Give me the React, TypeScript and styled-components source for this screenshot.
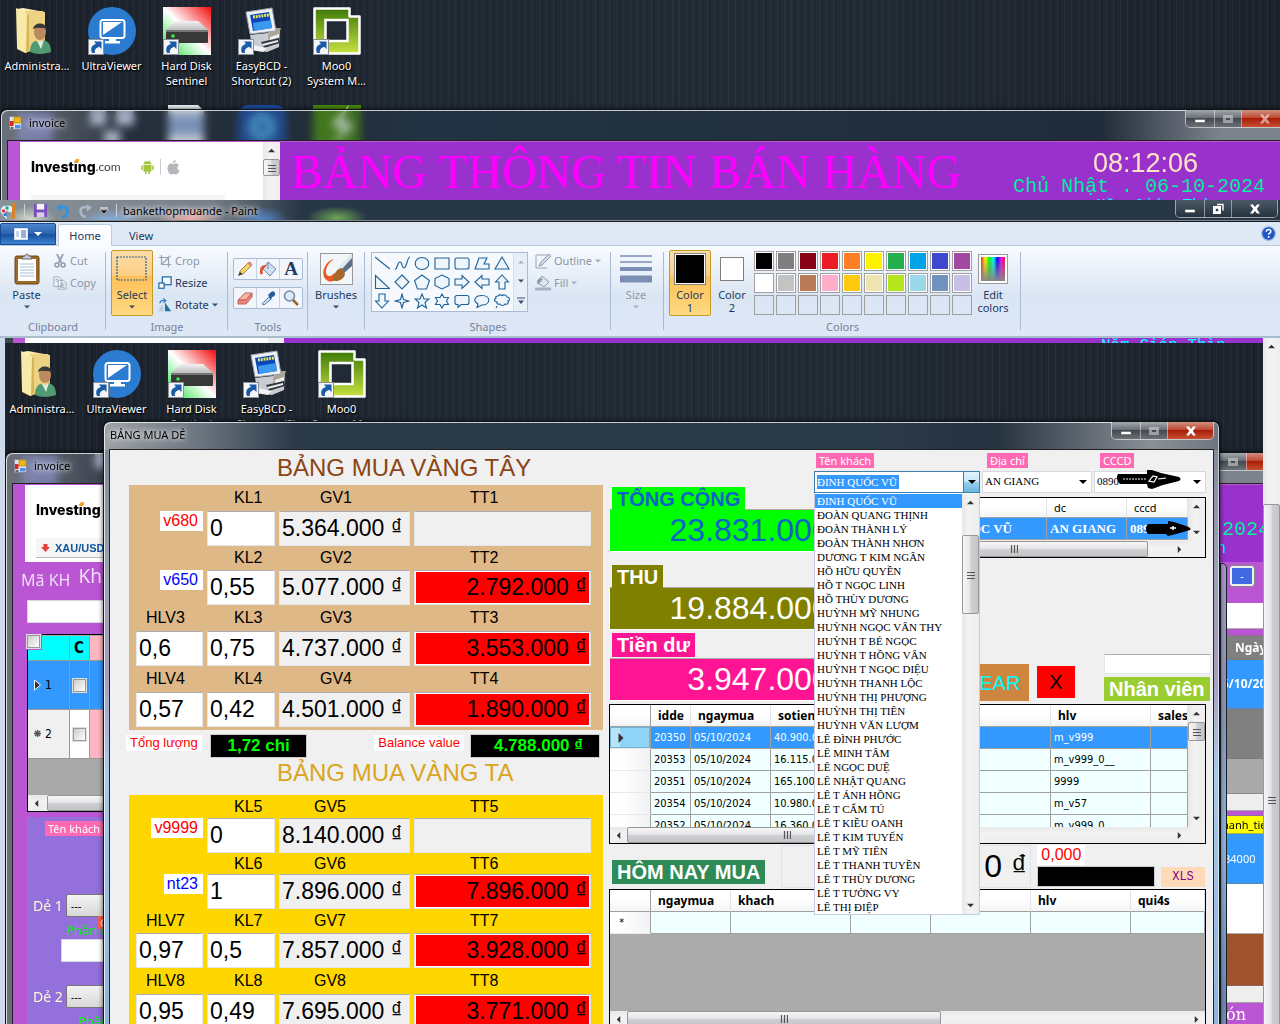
import React from "react";
import styled, { createGlobalStyle, css } from "styled-components";

const ui = `"Noto Sans", "Open Sans", sans-serif`;
const arial = `"Liberation Sans", Arial, sans-serif`;
const times = `"Liberation Serif", "Times New Roman", serif`;
const mono = `"Liberation Mono", "Courier New", monospace`;
const tahoma = `"DejaVu Sans Condensed", "Noto Sans", sans-serif`;

const GlobalStyle = createGlobalStyle`
  *, *::before, *::after { box-sizing: border-box; }
  html, body { margin: 0; height: 100%; overflow: hidden; }
  body { font: 11px/16px ${ui}; color: #000; background: #1d242e; }
  button, input, select { font: inherit; color: inherit; margin: 0; padding: 0; border: 0; border-radius: 0; }
  svg { display: block; flex: none; }
`;

const Screen = styled.div`
  height: 100vh;
  overflow: hidden;
  display: flex;
  flex-direction: column;
`;

/* ---------- desktop ---------- */

const Desktop = styled.div`
  position: relative;
  width: 100vw;
  min-width: 1280px;
  height: 100%;
  overflow: hidden;
  background:
    repeating-linear-gradient(90deg, rgba(255,255,255,.035) 0 1px, transparent 1px 3px, rgba(0,0,0,.1) 3px 4px, transparent 4px 7px),
    linear-gradient(90deg, #1c222c, #1f2833 30%, #222c37 60%, #1c232d);
`;

const TopStrip = styled.div`
  flex: 0 0 200px;
  overflow: hidden;
`;

const IconGrid = styled.div`
  display: grid;
  grid-template-columns: 74px repeat(4, 75px);
  grid-auto-rows: 98px;
  padding-top: 7px;
`;

const Shortcut = styled.div`
  display: flex;
  flex-direction: column;
  align-items: center;
  gap: 3px;
  color: #fff;
  font: 11px/15px ${ui};
  text-align: center;
  text-shadow: 0 1px 2px #000, 1px 1px 1px #000;
  white-space: pre-line;
`;

const LinkArrow = () => (
  <g>
    <rect x="0.5" y="32.5" width="15" height="15" fill="#f4f6f8" stroke="#8a8f98" />
    <path d="M4 46c-2-5 0-8 4-9l-2-2.500h7.500v7.500l-2.300-2.200c-3 1-5 3-4.200 6.200z" fill="#1a5ba8" />
  </g>
);

const AdminIcon = () => (
  <svg width="48" height="48" viewBox="0 0 48 48">
    <defs>
      <linearGradient id="fold" x1="0" x2="1" y1="0" y2="1"><stop offset="0" stopColor="#fff6c8" /><stop offset="1" stopColor="#e0b850" /></linearGradient>
    </defs>
    <path d="M4 2l6-1 22 4v34l-20 7-8-4z" fill="url(#fold)" />
    <path d="M12 4l18 0v32l-16 8z" fill="#ecd283" />
    <path d="M3 1l12 6v36l-2 3-9-5z" fill="#f9eaaa" />
    <path d="M14 7l2 1v34l-3 4z" fill="#d9b556" />
    <ellipse cx="27" cy="25" rx="6" ry="8" fill="#bb8a5e" />
    <path d="M20 22c1-7 13-8 14 1l-3-2c-4 0-8-1-11 1z" fill="#383838" />
    <path d="M17 45c0-7 3-11 6-11 3 2 6 1 8-1 5 2 7 5 7 12-5 2-14 3-21 0z" fill="#4f9a72" />
    <path d="M24 34l4 8 3-9c-3 2-4 2-7 1z" fill="#dfeee4" />
  </svg>
);

const ViewerIcon = () => (
  <svg width="48" height="48" viewBox="0 0 48 48">
    <circle cx="24" cy="24" r="24" fill="#2b7bd0" />
    <rect x="12.500" y="13" width="24" height="18" rx="2.500" fill="#2b7bd0" stroke="#fff" strokeWidth="2" />
    <path d="M15 15h19L15 28z" fill="#fff" />
    <path d="M21 31h7v3h4v2.500H17V34h4z" fill="#fff" />
    <LinkArrow />
  </svg>
);

const DiskIcon = () => (
  <svg width="48" height="48" viewBox="0 0 48 48">
    <defs>
      <linearGradient id="hd" x1="0" x2="1" y1="1" y2="0"><stop offset="0" stopColor="#1fe03a" /><stop offset=".5" stopColor="#fff" /><stop offset="1" stopColor="#f40a0a" /></linearGradient>
      <linearGradient id="hd2" x1="0" x2="0" y1="0" y2="1"><stop offset="0" stopColor="#f2f2f2" /><stop offset="1" stopColor="#bdbdbd" /></linearGradient>
    </defs>
    <rect width="48" height="48" fill="url(#hd)" />
    <path d="M3 23l10-9h22l10 9z" fill="url(#hd2)" />
    <rect x="3" y="23" width="42" height="13" rx="1" fill="#383838" />
    <rect x="3" y="23" width="42" height="2" fill="#777" />
    <circle cx="10" cy="29" r="1.800" fill="#35f040" />
    <LinkArrow />
  </svg>
);

const BcdIcon = () => (
  <svg width="48" height="48" viewBox="0 0 48 48">
    <path d="M12 28l18-2 6-6 6 2-1 18-12 5-14-2z" fill="#c9ccd2" />
    <path d="M30 28l5-7 8 0-4 12-8 2z" fill="#aaa691" />
    <path d="M32 30l9-3 0 3-9 4z" fill="#eef0f2" />
    <path d="M23 35l18-4 1 5-16 5z" fill="#34373e" />
    <path d="M24 37l16-4 0 2-15 4z" fill="#e8eaee" />
    <path d="M15 38l14 3-4 4-12-2z" fill="#f1f2f5" />
    <path d="M8 5l26-4 4 23-26 3z" fill="#eef0f4" stroke="#9aa0aa" />
    <path d="M12 8l19-3 3 16-19 3z" fill="#0c46b8" />
    <path d="M15 16l18-3 1 8-18 3z" fill="#3b9af0" />
    <path d="M15 10l16-2" stroke="#e6e45a" strokeWidth="3" strokeDasharray="2 .8" />
    <LinkArrow />
  </svg>
);

const MooIcon = () => (
  <svg width="48" height="48" viewBox="0 0 48 48">
    <defs>
      <linearGradient id="moo" x1="0" x2="0" y1="0" y2="1"><stop offset="0" stopColor="#3d7a08" /><stop offset="1" stopColor="#c8e240" /></linearGradient>
    </defs>
    <path d="M1.500 1.500h35v8h10v37h-45z" fill="url(#moo)" stroke="#fff" strokeWidth="2.500" strokeLinejoin="round" />
    <rect x="12.500" y="13" width="22" height="21" fill="#222a35" stroke="#fff" strokeWidth="2.500" />
    <LinkArrow />
  </svg>
);

const RowTwoIcon = ({ kind }: { kind: number }) => (
  <svg width="48" height="48" viewBox="0 0 48 48">
    {kind === 0 && <path d="M4 8h36v30H4z" fill="#6a6fc4" />}
    {kind === 1 && <path d="M2 6h16v14H2zM28 6h18v14H28zM16 26h16v14H16z" fill="#d4def4" />}
    {kind === 2 && <><path d="M5 0h30l6 6v42H5z" fill="#eef2f8" /><path d="M5 10h36v20H5z" fill="#8fa9d4" /></>}
    {kind === 3 && <><rect width="48" height="48" rx="10" fill="#1d4b9c" /><circle cx="24" cy="22" r="14" fill="#49a0dd" /><circle cx="24" cy="22" r="4" fill="#1d4b9c" /></>}
    {kind === 4 && <><rect width="48" height="48" fill="#4a8a0c" /><path d="M36 0L18 20l12 4-14 20 26-24-12-4z" fill="#e3f2d8" /></>}
  </svg>
);

const shortcuts = [
  { label: "Administra...", Icon: AdminIcon },
  { label: "UltraViewer", Icon: ViewerIcon },
  { label: "Hard Disk\nSentinel", Icon: DiskIcon },
  { label: "EasyBCD -\nShortcut (2)", Icon: BcdIcon },
  { label: "Moo0\nSystem M...", Icon: MooIcon },
];

const DesktopIcons = () => (
  <IconGrid>
    {shortcuts.map(({ label, Icon }) => (
      <Shortcut key={label}><Icon />{label}</Shortcut>
    ))}
    {[0, 1, 2, 3, 4].map((k) => (
      <Shortcut key={k}><RowTwoIcon kind={k} /></Shortcut>
    ))}
  </IconGrid>
);

/* ---------- window chrome ---------- */

const Frame = styled.section<{ $side: number }>`
  position: absolute;
  display: flex;
  flex-direction: column;
  padding: 0 ${(p) => p.$side}px;
  border: 1px solid #10151b;
  border-bottom: 0;
  border-radius: 7px 7px 0 0;
  box-shadow: inset 1px 1px 0 rgba(255,255,255,.75), inset -1px 0 0 rgba(255,255,255,.6), 0 0 5px rgba(0,0,0,.7);
  backdrop-filter: blur(4px);
`;

const InvoiceFrame = styled(Frame)`
  top: 109px;
  left: 0;
  right: -15px;
  height: 1000px;
  background: linear-gradient(90deg, rgba(150,155,165,.65), rgba(120,128,140,.5) 70px, rgba(60,80,100,.25) 130px, rgba(40,60,80,.25) 340px, rgba(36,54,72,.8) 420px, rgba(32,46,60,.8) 1100px, rgba(150,155,165,.8) 1220px);
`;

const BuyFrame = styled(Frame)`
  top: 78px;
  left: 98px;
  right: 65px;
  height: 1000px;
  background:
    linear-gradient(90deg, rgba(170,172,176,.9), rgba(120,128,138,.8) 100px, transparent 190px) 0 0 / 100% 28px no-repeat,
    linear-gradient(90deg, #2b3a49 0 70%, #25323f 80%, #8b9097 94%, #6f757e) 0 0 / 100% 28px no-repeat,
    linear-gradient(180deg, #7b8694, #9aa3b4 15%, #a79cc0 25%, #a9c9e8 35%, #8fb4d8 60%, #b9d7f2 75%, #84a6cc);
`;

const TitleBar = styled.header<{ $h: number }>`
  display: flex;
  align-items: flex-start;
  height: ${(p) => p.$h}px;
  flex: none;
`;

const TitleText = styled.h2<{ $pad?: number }>`
  flex: 1;
  display: flex;
  align-items: center;
  gap: 7px;
  margin: 0;
  padding-left: ${(p) => p.$pad ?? 0}px;
  font: 11px/26px ${ui};
  text-shadow: 0 0 5px #fff, 0 0 8px rgba(255,255,255,.8);
`;

const Caption = styled.div`
  display: flex;
  height: 18px;
  border: 1px solid rgba(255,255,255,.55);
  border-top: 0;
  border-radius: 0 0 5px 5px;
  overflow: hidden;
`;

const CaptionButton = styled.button<{ $kind: "min" | "max" | "close"; $red?: boolean; $dark?: boolean }>`
  width: ${(p) => (p.$kind === "close" ? 46 : p.$kind === "min" ? 28 : 27)}px;
  display: grid;
  place-items: center;
  border-left: ${(p) => (p.$kind === "min" ? "0" : "1px solid rgba(255,255,255,.45)")};
  background: ${(p) =>
    p.$red
      ? "linear-gradient(#d09080, #c04a34 45%, #a81c0a 50%, #c85030)"
      : p.$dark
      ? "linear-gradient(#4b5966, #26333f)"
      : "linear-gradient(#a3a8ad, #6a7077 45%, #43494f 50%, #6b7177)"};
  color: #fff;
`;

const CaptionGlyph = ({ kind, faded }: { kind: "min" | "max" | "restore" | "close"; faded?: boolean }) => (
  <svg width="14" height="12" viewBox="0 0 14 12" opacity={faded ? 0.55 : 1}>
    {kind === "min" && <rect x="2" y="6.500" width="10" height="3" fill="#fff" stroke="#555" strokeWidth=".5" />}
    {kind === "max" && <path fillRule="evenodd" d="M2 2h10v8H2zM5 5v2h4V5z" fill="#ddd" />}
    {kind === "restore" && <><path d="M6 1.500h6v6" fill="none" stroke="#fff" strokeWidth="1.400" /><path fillRule="evenodd" d="M2 3h8v8H2zM4.800 5.800v2.400h2.400V5.800z" fill="#fff" /></>}
    {kind === "close" && <path d="M2 1.500h3l2 2.500 2-2.500h3L8.800 6l3.200 4.500H9L7 8l-2 2.500H2L5.200 6z" fill="#fff" />}
  </svg>
);

const Captions = ({ red, dark, restore, faded }: { red?: boolean; dark?: boolean; restore?: boolean; faded?: boolean }) => (
  <Caption>
    <CaptionButton $kind="min" $dark={dark} aria-label="Minimize"><CaptionGlyph kind="min" /></CaptionButton>
    <CaptionButton $kind="max" $dark={dark} aria-label="Maximize"><CaptionGlyph kind={restore ? "restore" : "max"} faded={!restore} /></CaptionButton>
    <CaptionButton $kind="close" $dark={dark} $red={red} aria-label="Close"><CaptionGlyph kind="close" faded={faded} /></CaptionButton>
  </Caption>
);

const FormIcon = () => (
  <svg width="13" height="14" viewBox="0 0 13 14">
    <rect x=".5" y=".5" width="12" height="13" fill="#dfe3ea" stroke="#889" />
    <rect x="5" y="1" width="7" height="6" fill="#f3b71c" stroke="#a87a00" strokeWidth=".6" />
    <rect x="1" y="5" width="3.500" height="5" fill="#cf2a20" />
    <rect x="6" y="9" width="5.500" height="3.500" fill="#4f8fe8" />
    <rect x="1.500" y="11" width="3" height="2" fill="#666" />
  </svg>
);

/* ---------- scroll bars ---------- */

const Bar = styled.div<{ $v?: boolean }>`
  flex: none;
  display: flex;
  flex-direction: ${(p) => (p.$v ? "column" : "row")};
  ${(p) => (p.$v ? "width: 17px;" : "height: 16px;")}
  background: ${(p) => (p.$v ? "linear-gradient(90deg,#e8e8e8,#f3f3f3 40%,#eee)" : "linear-gradient(#e8e8e8,#f3f3f3 40%,#eee)")};
`;

const BarArrow = styled.span`
  flex: 0 0 17px;
  min-height: 16px;
  display: grid;
  place-items: center;
`;

const Thumb = styled.span<{ $v?: boolean; $len: number }>`
  flex: 0 1 ${(p) => p.$len}px;
  display: grid;
  place-items: center;
  border: 1px solid #979797;
  border-radius: 2px;
  background: ${(p) =>
    p.$v ? "linear-gradient(90deg,#f6f6f6,#e6e6e8 45%,#cdced2 55%,#c4c5c9)" : "linear-gradient(#f6f6f6,#e6e6e8 45%,#cdced2 55%,#c4c5c9)"};
`;

const Track = styled.span<{ $len?: number }>`
  flex: ${(p) => (p.$len === undefined ? "1 1 0" : `0 0 ${p.$len}px`)};
`;

const arrows = { up: "M0 6l4-4 4 4z", down: "M0 2l4 4 4-4z", left: "M6 0L2 4l4 4z", right: "M2 0l4 4-4 4z" };
const Arrow = ({ dir, color = "#333", size = 7 }: { dir: keyof typeof arrows; color?: string; size?: number }) => (
  <svg width={size} height={size} viewBox="0 0 8 8"><path d={arrows[dir]} fill={color} /></svg>
);

const Scroll = ({ v, len, offset = 0 }: { v?: boolean; len: number; offset?: number }) => (
  <Bar $v={v} aria-hidden="true">
    <BarArrow><Arrow dir={v ? "up" : "left"} /></BarArrow>
    <Track $len={offset} />
    {len > 0 && (
      <Thumb $v={v} $len={len}>
        <svg width="8" height="8" viewBox="0 0 8 8">
          <path d={v ? "M0 1.500h8M0 4.500h8M0 7.500h8" : "M1.500 0v8M4.500 0v8M7.500 0v8"} stroke="#555" strokeWidth="1.200" />
        </svg>
      </Thumb>
    )}
    <Track />
    <BarArrow><Arrow dir={v ? "down" : "right"} /></BarArrow>
  </Bar>
);

/* ---------- invoice window ---------- */

const InvoiceClient = styled.div`
  flex: 1;
  display: flex;
  flex-direction: column;
  border: 1px solid #222;
  padding: 1px 0 0 12px;
  background: #ba55d3;
`;

const Banner = styled.div`
  display: flex;
  height: 77px;
  flex: none;
  background: #9932cc;
`;

const WebPanel = styled.div`
  width: 243px;
  flex: none;
  padding: 16px 0 0 11px;
  background: #fff;
  display: flex;
  flex-direction: column;
  gap: 19px;
  overflow: hidden;
`;

const Brand = styled.div`
  position: relative;
  display: flex;
  align-items: center;
  font: 800 14px/18px Inter, ${ui};
  small { font: 12px/18px Lato, ${ui}; color: #444; margin-right: 20px; }
  > em { position: absolute; left: 44px; top: 1px; width: 4px; height: 4px; border-radius: 2px 0; background: #f7a01c; }
`;

const Quote = styled.div`
  margin-right: 38px;
  padding: 1px 5px;
  display: flex;
  align-items: center;
  gap: 5px;
  height: 20px;
  flex: none;
  background: #f5f5f5;
  border-bottom: 1px solid #bbb;
  font: bold 11px/18px ${arial};
  color: #1256a0;
`;

const Headline = styled.h2`
  flex: 1;
  margin: 0;
  padding-left: 11px;
  font: 48px/60px ${times};
  color: #ff00ff;
  white-space: nowrap;
`;

const ClockBlock = styled.div`
  width: 274px;
  padding-top: 8px;
  flex: none;
`;
const Time = styled.div`
  height: 26px;
  padding-left: 80px;
  font: 27px/26px ${arial};
  color: #ffe4c4;
`;
const DateLine = styled.div`
  font: 20px/22px ${mono};
  color: #00fa9a;
  white-space: nowrap;
`;
const Lunar = styled.div`
  padding-left: 83px;
  font: 16px/16px ${mono};
  color: #00ffff;
  white-space: nowrap;
`;

const Android = () => (
  <svg width="13" height="15" viewBox="0 0 13 15" fill="#a4c639">
    <path d="M2.500 5h8v6.500h-1.500V14H7.400v-2.500H5.600V14H4v-2.500H2.500zM.3 5.500h1.500v4.500H.3zM11.200 5.500h1.500v4.500h-1.500zM2.500 4.300C2.600 2.800 3.500 2 4.300 1.700L3.500.4h.6l.8 1.100c1-.3 2.200-.3 3.200 0L8.900.4h.6l-.8 1.300c.8.3 1.700 1.100 1.800 2.600z" />
  </svg>
);
const Apple = () => (
  <svg width="13" height="15" viewBox="0 0 13 15" fill="#b4b8bc">
    <path d="M8.600 0c.2 1.600-1 3.200-2.500 3.200C5.900 1.700 7.200.2 8.600 0zM6.600 4.200c.8 0 1.500-.7 2.700-.7 1 0 2 .5 2.700 1.400-2.400 1.400-2 4.700.5 5.600-.6 1.700-2 4-3.400 4-1 0-1.400-.6-2.500-.6-1.200 0-1.600.6-2.500.6C2.400 14.500.5 11.500.5 8.300.5 5.300 2.300 3.600 4.100 3.600c1.100 0 1.800.6 2.500.6z" />
  </svg>
);
const Divider = styled.i`
  width: 1px; height: 16px; margin: 0 6px; background: #ccc;
`;

const Body = styled.div`
  flex: 1;
  display: flex;
  justify-content: space-between;
`;

const LeftPane = styled.div`
  width: 300px;
  padding-left: 2px;
`;

const Captioned = styled.div`
  display: flex;
  height: 38px;
  gap: 8px;
  margin-left: -6px;
  font: 16px/36px ${ui};
  color: #f0dcf6;
  b { font: 19px/28px ${ui}; }
`;

const PlainInput = styled.input<{ $w?: number }>`
  display: block;
  width: ${(p) => p.$w ?? 280}px;
  height: 23px;
  background: #fff;
  border: 1px solid #d4d8e0;
`;

const InvoiceTable = styled.table`
  width: 280px;
  table-layout: fixed;
  border-collapse: collapse;
  font: 12px/16px ${tahoma};
  th { height: 24px; background: #00ffff; border: 1px solid #999; border-width: 0 1px 1px 0; font: bold 15px/18px ${tahoma}; padding: 0; }
  th:last-child, tr:last-child td:last-child { background: #ffb6c1; }
  td { height: 49px; padding: 0 0 0 6px; border: 1px solid #999; border-width: 0 1px 1px 0; background: #f0f0f0; }
  tbody tr:first-child td { background: #3399ff; }
  tbody tr:last-child td:nth-child(2) { background: #fff; }
  td + td { padding: 0; text-align: center; }
`;
const InvoiceGrid = styled.div`
  position: relative;
  width: 280px;
  height: 178px;
  margin-top: 11px;
  border: 1px solid #000;
  padding-top: 1px;
  background: #a9a9a9;
  display: flex;
  flex-direction: column;
  justify-content: space-between;
`;
const Check = styled.input`
  appearance: none;
  width: 13px;
  height: 13px;
  background: linear-gradient(135deg, #ccc, #fff);
  border: 1px solid #999;
  outline: 1px solid #ddd;
  vertical-align: middle;
`;
const CornerCheck = styled.div`
  position: absolute;
  left: -1px;
  top: -1px;
  padding: 0 2px 2px 0;
  line-height: 12px;
  background: #ba55d3;
`;
const RowMark = styled.span`
  display: flex;
  align-items: center;
  gap: 4px;
`;

const Purple = styled.div`
  width: 290px;
  height: 300px;
  margin-top: 5px;
  padding: 4px 0 0 6px;
  background: #9370db;
  color: #fffacd;
`;
const Pink = styled.label`
  display: inline-block;
  padding: 0 3px;
  font: 11px/15px ${ui};
  color: #fff;
  background: #ff69b4;
  white-space: nowrap;
`;
const PartRow = styled.div<{ $gap: number }>`
  position: relative;
  display: flex;
  align-items: center;
  gap: 4px;
  margin-top: ${(p) => p.$gap}px;
  font: 14px/22px ${ui};
  label { width: 29px; white-space: nowrap; }
  select { appearance: none; width: 100px; height: 23px; padding-left: 4px; border: 1px solid #777; border-radius: 2px; background: linear-gradient(#f3f3f3,#d8d8d8); font: 11px/20px ${ui}; color: #000; }
`;
const Weigh = styled.span`
  position: absolute;
  left: 65px;
  top: 22px;
  padding: 0 2px;
  background: #ff6347;
  color: #fff;
  font: 11px/13px ${ui};
`;
const Share = styled.div<{ $pad: number }>`
  padding: 4px 0 0 ${(p) => p.$pad}px;
  font: 13px/18px ${ui};
  color: #00ff00;
`;
const SharePad = styled.div<{ $pad: number }>`
  padding-left: ${(p) => p.$pad}px;
`;

const RightPane = styled.div`
  width: 72px;
  padding-left: 2px;
  display: flex;
  flex-direction: column;
`;
const Cell = styled.div<{ $h: number; $bg: string; $c?: string; $pad?: number }>`
  height: ${(p) => p.$h}px;
  flex: none;
  padding-left: ${(p) => p.$pad ?? 0}px;
  display: flex;
  align-items: center;
  background: ${(p) => p.$bg};
  color: ${(p) => p.$c ?? "#000"};
  border-bottom: 1px solid rgba(120,120,120,.6);
  white-space: nowrap;
  overflow: hidden;
`;
const Bold = styled(Cell)`font: bold 12px/16px ${ui};`;
const Serif = styled(Cell)`font: 16px/20px "DejaVu Serif", serif; border: 0;`;
const MinusRow = styled.div`
  height: 41px;
  padding: 4px 0 0 8px;
  display: flex;
  gap: 10px;
  align-items: flex-start;
`;
const Minus = styled.button`
  width: 24px;
  height: 20px;
  border: 2px solid #eee;
  outline: 1px solid #888;
  border-radius: 2px;
  background: #4169e1;
  color: #fff;
`;
const SideEdge = styled.div`
  position: absolute;
  top: 220px;
  left: 1215px;
  width: 7px;
  height: 800px;
  border: 1px solid #1a2028;
  border-radius: 0 5px 0 0;
  background: linear-gradient(180deg, #a898c8, #8a96b4 18%, #8fb4d8 35%, #7088b0 55%, #a0c0e4 75%, #54484e 82%, #7c6ca8);
`;

const Invoice = ({ full }: { full?: boolean }) => (
  <InvoiceFrame $side={6}>
    <TitleBar $h={30}>
      <TitleText $pad={2}><FormIcon />invoice</TitleText>
      <Captions red faded />
    </TitleBar>
    <InvoiceClient>
      <Banner>
        <WebPanel>
          <Brand>Investing<em />{!full && <><small>.com</small><Android /><Divider /><Apple /></>}</Brand>
          <Quote>
            <svg width="9" height="8" viewBox="0 0 9 8"><path d="M2.500 0h4v3H9L4.500 8 0 3h2.500z" fill="#e8403a" /></svg>
            XAU/USD
          </Quote>
        </WebPanel>
        <Scroll v len={17} />
        <Headline>{!full && "BẢNG THÔNG TIN BÁN HÀNG"}</Headline>
        <ClockBlock>
          <Time>{!full && "08:12:06"}</Time>
          <DateLine>Chủ Nhật . 06-10-2024</DateLine>
          <Lunar>Năm Giáp Thìn</Lunar>
        </ClockBlock>
      </Banner>
      {full && (
        <Body>
          <LeftPane>
            <Captioned><label htmlFor="makh">Mã KH</label><b>Khách</b></Captioned>
            <PlainInput id="makh" />
            <InvoiceGrid>
              <InvoiceTable>
                <colgroup><col width="41" /><col width="20" /><col /></colgroup>
                <thead><tr><th /><th>C</th><th /></tr></thead>
                <tbody>
                  {["1", "2"].map((n) => (
                    <tr key={n}>
                      <td>
                        <RowMark>
                          {n === "1"
                            ? <svg width="7" height="12" viewBox="0 0 7 12"><path d="M.5 1l6 5-6 5z" fill="#333" stroke="#fff" /></svg>
                            : <svg width="7" height="7" viewBox="0 0 7 7"><path d="M3.500 0v7M0 3.500h7M1 1l5 5M6 1L1 6" stroke="#555" strokeWidth="1.300" /></svg>}
                          {n}
                        </RowMark>
                      </td>
                      <td><Check type="checkbox" aria-label={n} /></td><td />
                    </tr>
                  ))}
                </tbody>
              </InvoiceTable>
              <Scroll len={150} offset={2} />
              <CornerCheck><Check type="checkbox" aria-label="All" /></CornerCheck>
            </InvoiceGrid>
            <Purple>
              <SharePad $pad={12}><Pink as="span">Tên khách</Pink></SharePad>
              <PartRow $gap={57}><label htmlFor="de1">Dẻ 1</label><select id="de1"><option>---</option></select><Weigh>Cân</Weigh></PartRow>
              <Share $pad={33}>Phần dẻ</Share>
              <SharePad $pad={28}><PlainInput $w={120} aria-label="Phần dẻ 1" /></SharePad>
              <PartRow $gap={23}><label htmlFor="de2">Dẻ 2</label><select id="de2"><option>---</option></select></PartRow>
              <Share $pad={45}>Phần dẻ</Share>
            </Purple>
          </LeftPane>
          <RightPane>
            <MinusRow><Minus>-</Minus></MinusRow>
            <Cell $h={26} $bg="#fff" />
            <Cell $h={7} $bg="#ba55d3" />
            <Bold $h={24} $bg="#808080" $c="#fff" $pad={13}>Ngày</Bold>
            <Bold $h={49} $bg="#3399ff" $c="#fff">5/10/2024</Bold>
            <Cell $h={50} $bg="#808080" />
            <Cell $h={35} $bg="#a9a9a9" />
            <Cell $h={17} $bg="#eee" />
            <Cell $h={5} $bg="#ba55d3" />
            <Cell $h={18} $bg="#ffff00">hanh_tien</Cell>
            <Cell $h={50} $bg="#3399ff" $c="#fff" $pad={2}>34000</Cell>
            <Cell $h={50} $bg="#fff" />
            <Cell $h={52} $bg="#a0522d" />
            <Cell $h={17} $bg="#eee" />
            <Serif $h={24} $bg="#ba55d3" $c="#fff" $pad={4}>ón</Serif>
          </RightPane>
        </Body>
      )}
    </InvoiceClient>
  </InvoiceFrame>
);

/* ---------- purchase form ---------- */

const Form = styled.form`
  flex: 1;
  display: flex;
  border: 1px solid #222;
  border-bottom: 0;
  background: #f0f0f0;
`;

const GoldSide = styled.div`
  width: 499px;
  flex: none;
  padding-left: 19px;
`;

const GoldTitle = styled.h2<{ $c: string; $h: number; $below?: number }>`
  margin: 0;
  padding: 0 0 ${(p) => p.$below ?? 0}px 148px;
  font: 24px/${(p) => p.$h}px ${arial};
  color: ${(p) => p.$c};
`;

const GoldPanel = styled.div<{ $bg: string; $rows: string }>`
  display: grid;
  width: 474px;
  grid-template-columns: 67px 68px 131px 177px;
  grid-template-rows: ${(p) => p.$rows};
  column-gap: 4px;
  padding: 0 0 3px 7px;
  background: ${(p) => p.$bg};
`;

const FieldLabel = styled.label<{ $pad: number }>`
  align-self: center;
  padding-left: ${(p) => p.$pad}px;
  font: 16px/18px ${arial};
`;

const Field = styled.input<{ $bg?: string; $right?: boolean }>`
  width: 100%;
  height: 35px;
  padding: 0 3px 0 2px;
  border: 1px solid #e3e6ec;
  border-top-color: #abadb3;
  background: ${(p) => p.$bg ?? "#fff"};
  ${(p) => p.$bg === "#ff0000" && css`box-shadow: inset 0 0 0 1px #fff;`}
  font: 23px/31px ${arial};
  text-align: ${(p) => (p.$right ? "right" : "left")};
`;

const Tag = styled.span<{ $c: string }>`
  justify-self: end;
  align-self: start;
  padding: 0 5px 0 3px;
  font: 16px/20px ${arial};
  color: ${(p) => p.$c};
  background: #fff;
`;

const SumRow = styled.div`
  display: flex;
  align-items: flex-start;
  width: 474px;
  height: 29px;
  padding-top: 4px;
  margin-left: -3px;
`;
const SumTag = styled.label`
  margin-top: 1px;
  padding: 0 4px;
  font: 13px/16px ${arial};
  color: #ff0000;
  background: #fff;
`;
const SumBox = styled.output<{ $w: number; $push?: boolean }>`
  width: ${(p) => p.$w}px;
  height: 24px;
  margin-left: ${(p) => (p.$push ? "6px" : "8px")};
  margin-right: ${(p) => (p.$push ? "0" : "auto")};
  padding-right: 16px;
  border: 1px solid #ccc;
  background: #000;
  color: #00ff00;
  font: bold 17px/22px ${arial};
  text-align: right;
`;

type Row = { n: number; tag?: string; tagColor?: string; hlv?: string; kl: string; gv: string; tt: string };

const westRows: Row[] = [
  { n: 1, tag: "v680", tagColor: "#ff0000", kl: "0", gv: "5.364.000 ₫", tt: "" },
  { n: 2, tag: "v650", tagColor: "#0000ff", kl: "0,55", gv: "5.077.000 ₫", tt: "2.792.000 ₫" },
  { n: 3, hlv: "0,6", kl: "0,75", gv: "4.737.000 ₫", tt: "3.553.000 ₫" },
  { n: 4, hlv: "0,57", kl: "0,42", gv: "4.501.000 ₫", tt: "1.890.000 ₫" },
];
const localRows: Row[] = [
  { n: 5, tag: "v9999", tagColor: "#ff0000", kl: "0", gv: "8.140.000 ₫", tt: "" },
  { n: 6, tag: "nt23", tagColor: "#0000ff", kl: "1", gv: "7.896.000 ₫", tt: "7.896.000 ₫" },
  { n: 7, hlv: "0,97", kl: "0,5", gv: "7.857.000 ₫", tt: "3.928.000 ₫" },
  { n: 8, hlv: "0,95", kl: "0,49", gv: "7.695.000 ₫", tt: "3.771.000 ₫" },
];

const GoldRows = ({ rows, gvPad }: { rows: Row[]; gvPad: number }) => (
  <>
    {rows.map((r) => (
      <React.Fragment key={r.n}>
        {r.hlv ? <FieldLabel $pad={10} htmlFor={`hlv${r.n}`}>{`HLV${r.n}`}</FieldLabel> : <span />}
        <FieldLabel $pad={27} htmlFor={`kl${r.n}`}>{`KL${r.n}`}</FieldLabel>
        <FieldLabel $pad={gvPad} htmlFor={`gv${r.n}`}>{`GV${r.n}`}</FieldLabel>
        <FieldLabel $pad={56} htmlFor={`tt${r.n}`}>{`TT${r.n}`}</FieldLabel>
        {r.hlv ? <Field id={`hlv${r.n}`} defaultValue={r.hlv} /> : <Tag $c={r.tagColor!}>{r.tag}</Tag>}
        <Field id={`kl${r.n}`} defaultValue={r.kl} />
        <Field id={`gv${r.n}`} $bg="#f0f0f0" defaultValue={r.gv} />
        <Field id={`tt${r.n}`} $right $bg={r.tt ? "#ff0000" : "#f0f0f0"} defaultValue={r.tt} />
      </React.Fragment>
    ))}
  </>
);

const TradeSide = styled.div`
  flex: 1;
  min-width: 0;
  padding-right: 7px;
  display: flex;
  flex-direction: column;
`;

const Overview = styled.div`
  display: grid;
  grid-template-columns: 205px 48px minmax(0, 1fr);
  grid-template-rows: 46px 206px;
`;

const Totals = styled.div`
  grid-area: 1 / 1 / 3 / 3;
  padding-top: 37px;
  display: grid;
  grid-template-rows: 78px 68px 69px;
`;

const Heading = styled.label<{ $bg: string; $c?: string }>`
  display: block;
  width: max-content;
  padding: 0 5px;
  font: bold 20px/24px ${arial};
  color: ${(p) => p.$c ?? "#fff"};
  background: ${(p) => p.$bg};
  white-space: nowrap;
`;

const Total = styled.div<{ $bg: string; $c: string; $split?: boolean }>`
  display: flex;
  flex-direction: column;
  ${Heading} { margin-left: 3px; position: relative; z-index: 1; }
  output {
    display: block;
    height: 43px;
    margin-top: ${(p) => (p.$split ? "1px" : "-2px")};
    padding-right: 6px;
    border: 1px solid #fff;
    border-top-color: #aaa;
    background: ${(p) => p.$bg};
    color: ${(p) => p.$c};
    font: 32px/41px ${arial};
    text-align: right;
  }
`;

const Customer = styled.div`
  grid-area: 1 / 2 / 2 / 4;
  position: relative;
  display: grid;
  grid-template-columns: 166px 110px minmax(0, 1fr);
  column-gap: 2px;
  padding-top: 3px;
`;
const CustomerField = styled.div<{ $pad: number }>`
  ${Pink} { margin: 0 0 3px ${(p) => p.$pad}px; vertical-align: top; }
`;
const Combo = styled.div<{ $open?: boolean }>`
  position: relative;
  display: flex;
  align-items: center;
  height: 22px;
  padding-left: 2px;
  background: #fff;
  border: 1px solid ${(p) => (p.$open ? "#3c7fb1" : "#d6d9df")};
  font: 11px/14px ${times};
  input { width: 82px; height: 14px; background: #3399ff; color: #fff; }
  select { appearance: none; flex: 1; background: transparent; height: 18px; align-self: flex-start; }
  > svg { margin-right: 4px; }
`;
const DropButton = styled.button`
  width: 16px;
  height: 20px;
  margin-left: auto;
  display: grid;
  place-items: center;
  border-left: 1px solid #3c7fb1;
  background: linear-gradient(#e3f4fc, #c4e5f6 50%, #98d1ef 50%, #6cb6dc);
`;

const Popup = styled.div`
  position: absolute;
  z-index: 5;
  top: 43px;
  left: 0;
  width: 166px;
  display: flex;
  padding-top: 1px;
  background: #fff;
  border: 1px solid #c8cce0;
  border-top: 0;
`;
const NameList = styled.ul`
  flex: 1;
  margin: 0;
  padding: 0;
  list-style: none;
  font: 11px/14px ${times};
  li { height: 14px; padding-left: 2px; white-space: nowrap; }
  li[aria-selected="true"] { background: #3399ff; color: #fff; }
`;

const names = [
  "ĐINH QUỐC VŨ", "ĐOÀN QUANG THỊNH", "ĐOÀN THÀNH LÝ", "ĐOÀN THÀNH NHƠN", "DƯƠNG T KIM NGÂN",
  "HỒ HỮU QUYỀN", "HỒ T NGỌC LINH", "HỒ THÙY DƯƠNG", "HUỲNH MỸ NHUNG", "HUỲNH NGỌC VÂN THY",
  "HUỲNH T BÉ NGỌC", "HUỲNH T HỒNG VÂN", "HUỲNH T NGỌC DIỆU", "HUỲNH THANH LỘC", "HUỲNH THỊ PHƯỢNG",
  "HUỲNH THỊ TIÊN", "HUỲNH VĂN LƯỢM", "LÊ ĐÌNH PHƯỚC", "LÊ MINH TÂM", "LÊ NGỌC DUỆ",
  "LÊ NHẬT QUANG", "LÊ T ÁNH HỒNG", "LÊ T CẨM TÚ", "LÊ T KIỀU OANH", "LÊ T KIM TUYẾN",
  "LÊ T MỸ TIÊN", "LÊ T THANH TUYỀN", "LÊ T THÙY DƯƠNG", "LÊ T TƯỜNG VY", "LÊ THỊ ĐIỆP",
];

const Detail = styled.div`
  grid-area: 2 / 3 / 3 / 4;
  min-width: 0;
  display: flex;
  flex-direction: column;
  justify-content: space-between;
  padding-bottom: 1px;
`;

const GridBox = styled.div<{ $gap?: number }>`
  display: flex;
  flex-direction: column;
  margin-top: ${(p) => p.$gap ?? 0}px;
  border: 1px solid #000;
  background: #f0f0f0;
`;
const GridMain = styled.div<{ $h: number; $bg?: string }>`
  position: relative;
  display: flex;
  height: ${(p) => p.$h}px;
  background: ${(p) => p.$bg ?? "#f0f0f0"};
`;
const Clip = styled.div`
  flex: 1;
  min-width: 0;
  overflow: hidden;
`;
const BottomScroll = styled.div<{ $corner?: boolean }>`
  padding-right: ${(p) => (p.$corner ? 17 : 0)}px;
  > div { width: 100%; }
`;
const DataTable = styled.table<{ $head?: number }>`
  width: 100%;
  table-layout: fixed;
  border-collapse: separate;
  border-spacing: 0;
  font: 11px/16px ${tahoma};
  th {
    height: ${(p) => p.$head ?? 22}px; padding: 0 0 0 7px; text-align: left;
    font: bold 12px/16px ${ui};
    background: linear-gradient(#fff 45%, #f3f4f6);
    border-right: 1px solid #e2e3e8; border-bottom: 1px solid #a0a0a0;
    overflow: hidden; white-space: nowrap;
  }
  td {
    height: 22px; padding: 0 0 0 3px; background: #f0ffff;
    border-right: 1px solid #a0a0a0; border-bottom: 1px solid #a0a0a0;
    overflow: hidden; white-space: nowrap;
  }
  td:first-child { padding-left: 6px; background: linear-gradient(90deg, #fff 24%, #f1f2f5); border-bottom-color: #e8e8e8; }
  th:first-child { border-right-color: #a0a0a0; }
  tr[aria-selected="true"] td { background: #3399ff; color: #fff; }
  tr[aria-selected="true"] td:first-child { background: linear-gradient(90deg, #b9e4f8 24%, #8fd4f6 24%); box-shadow: inset 0 0 0 1px #6fb6dc; }
`;
const ClientTable = styled(DataTable)`
  th { font: 11px/16px ${ui}; }
  tbody td { font: bold 13px/16px ${times}; }
`;

const Scribble = styled.svg<{ $top: number; $right: number }>`
  position: absolute;
  top: ${(p) => p.$top}px;
  right: ${(p) => p.$right}px;
  z-index: 2;
`;

const Actions = styled.div`
  display: flex;
  align-items: flex-end;
  justify-content: flex-end;
`;
const Clear = styled.button`
  width: 84px;
  height: 37px;
  background: #cd853f;
  color: #00ffff;
  font: 20px/30px ${arial};
  margin-right: 8px;
`;
const Cross = styled.button`
  width: 38px;
  height: 32px;
  background: #ff0000;
  font: 20px/30px ${arial};
  margin: 0 29px 3px 0;
`;
const Staff = styled.div`
  width: 102px;
  display: flex;
  flex-direction: column;
  gap: 3px;
  input { width: 107px; height: 20px; background: #fff; border: 1px solid #e3e6ec; border-top-color: #abadb3; }
`;

const Today = styled.div`
  display: flex;
  align-items: flex-start;
  height: 45px;
  padding: 1px 1px 0 3px;
  > ${Heading} { margin-top: 15px; }
`;
const TodayBox = styled.output`
  width: 250px;
  height: 43px;
  margin: 0 6px 0 16px;
  padding-right: 3px;
  border: 1px solid #dfe2e8;
  font: 32px/41px ${arial};
  text-align: right;
`;
const Small = styled.div`
  flex: 1;
  min-width: 0;
  display: flex;
  flex-direction: column;
  align-items: flex-start;
  gap: 1px;
  span { padding: 0 4px; background: #fff; color: #ff0000; font: 16px/20px ${arial}; }
  input { width: 118px; height: 21px; background: #000; border: 1px solid #ccc; }
`;
const Xls = styled.button`
  width: 44px;
  height: 20px;
  margin-top: 22px;
  background: #ffdab9;
  color: #800080;
  font: 12px/20px ${mono};
`;

const purchases = [
  ["20350", "05/10/2024", "40.900.000", "m_v999"],
  ["20353", "05/10/2024", "16.115.000", "m_v999_0__"],
  ["20351", "05/10/2024", "165.100.000", "9999"],
  ["20354", "05/10/2024", "10.980.000", "m_v57"],
  ["20352", "05/10/2024", "16.360.000", "m_v999_0"],
];

const BuyWindow = () => (
  <BuyFrame $side={5}>
    <TitleBar $h={27}>
      <TitleText $pad={1}>BẢNG MUA DẺ</TitleText>
      <Captions red />
    </TitleBar>
    <Form onSubmit={(e) => e.preventDefault()}>
      <GoldSide>
        <GoldTitle $c="#8b4513" $h={35}>BẢNG MUA VÀNG TÂY</GoldTitle>
        <GoldPanel $bg="#deb887" $rows="26px 35px 24px 35px 26px 35px 26px 35px">
          <GoldRows rows={westRows} gvPad={41} />
        </GoldPanel>
        <SumRow>
          <SumTag htmlFor="sumw">Tổng lượng</SumTag>
          <SumBox id="sumw" $w={97}>1,72 chỉ</SumBox>
          <SumTag htmlFor="sumb">Balance value</SumTag>
          <SumBox id="sumb" $w={130} $push>4.788.000 ₫</SumBox>
        </SumRow>
        <GoldTitle $c="#daa520" $h={28} $below={8}>BẢNG MUA VÀNG TA</GoldTitle>
        <GoldPanel $bg="#ffd700" $rows="23px 35px 21px 35px 24px 35px 26px 35px">
          <GoldRows rows={localRows} gvPad={35} />
        </GoldPanel>
      </GoldSide>

      <TradeSide>
        <Overview>
          <Totals>
            <Total $bg="#00ff00" $c="#0a64c8"><Heading $bg="#00ff00" $c="#0a64c8" htmlFor="t1">TỔNG CỘNG</Heading><output id="t1">23.831.000 ₫</output></Total>
            <Total $bg="#808000" $c="#fff"><Heading $bg="#808000" htmlFor="t2">THU</Heading><output id="t2">19.884.000 ₫</output></Total>
            <Total $bg="#ff1493" $c="#fff" $split><Heading $bg="#ff1493" htmlFor="t3">Tiền dư</Heading><output id="t3">3.947.000 ₫</output></Total>
          </Totals>
          <Customer>
            <CustomerField $pad={2}>
              <Pink htmlFor="ten">Tên khách</Pink>
              <Combo $open>
                <input id="ten" role="combobox" aria-expanded="true" aria-controls="names" defaultValue="ĐINH QUỐC VŨ" />
                <DropButton type="button" aria-label="Open"><Arrow dir="down" color="#000" size={8} /></DropButton>
              </Combo>
            </CustomerField>
            <CustomerField $pad={5}>
              <Pink htmlFor="diachi">Địa chỉ</Pink>
              <Combo><select id="diachi"><option>AN GIANG</option></select><Arrow dir="down" color="#000" size={8} /></Combo>
            </CustomerField>
            <CustomerField $pad={6}>
              <Pink htmlFor="cccd">CCCD</Pink>
              <Combo>
                <select id="cccd"><option>0890</option></select><Arrow dir="down" color="#000" size={8} />
                <Scribble $top={-2} $right={19} width="66" height="20" viewBox="0 0 66 20">
                  <path d="M2 4h29V0l5 0 9 3 18 4q3 2 0 4l-16 4-11 4-4-1-1-4-27 0q-5-5-2-10z" fill="#000" />
                  <path d="M7 9h24" stroke="#e8eef6" strokeWidth="1.200" strokeDasharray="2 1" fill="none" />
                  <path d="M33 11l4-5 4 1-3 5zM42 9l8-1" stroke="#fff" strokeWidth="1.200" fill="none" />
                </Scribble>
              </Combo>
            </CustomerField>
            <Popup>
              <NameList id="names" role="listbox">
                {names.map((n, i) => <li key={n} role="option" aria-selected={i === 0}>{n}</li>)}
              </NameList>
              <Scroll v len={79} offset={24} />
            </Popup>
          </Customer>
          <Detail>
            <GridBox $gap={1}>
              <GridMain $h={43}>
                <Clip>
                  <ClientTable $head={20}>
                    <colgroup><col width="48" /><col /><col width="80" /><col width="61" /></colgroup>
                    <thead><tr><th /><th>ten</th><th>dc</th><th>cccd</th></tr></thead>
                    <tbody><tr aria-selected="true"><td /><td>ĐINH QUỐC VŨ</td><td>AN GIANG</td><td>0890</td></tr></tbody>
                  </ClientTable>
                </Clip>
                <Scroll v len={0} />
                <Scribble $top={23} $right={13} width="46" height="16" viewBox="0 0 46 16">
                  <path d="M2 3h20V0l6 1 12 4q6 2 4 4l-10 3-12 3-2-2-18 0q-4-5 0-10z" fill="#000" />
                  <path d="M24 7h6M27 5v4" stroke="#fff" strokeWidth="1.500" fill="none" />
                </Scribble>
              </GridMain>
              <BottomScroll $corner><Scroll len={268} /></BottomScroll>
            </GridBox>
            <Actions>
              <Clear type="button">CLEAR</Clear>
              <Cross type="button">X</Cross>
              <Staff>
                <input id="staff" />
                <Heading htmlFor="staff" $bg="#9acd32">Nhân viên</Heading>
              </Staff>
            </Actions>
          </Detail>
        </Overview>

        <GridBox $gap={2}>
          <GridMain $h={122}>
            <Clip>
              <DataTable>
                <colgroup><col width="41" /><col width="40" /><col width="80" /><col width="80" /><col /><col width="100" /><col width="37" /></colgroup>
                <thead><tr><th /><th>idde</th><th>ngaymua</th><th>sotien</th><th /><th>hlv</th><th>sales</th></tr></thead>
                <tbody>
                  {purchases.map(([id, day, sum, hlv], i) => (
                    <tr key={id} aria-selected={i === 0}>
                      <td>{i === 0 && <Arrow dir="right" size={10} />}</td>
                      <td>{id}</td><td>{day}</td><td>{sum}</td><td /><td>{hlv}</td><td />
                    </tr>
                  ))}
                </tbody>
              </DataTable>
            </Clip>
            <Scroll v len={19} />
          </GridMain>
          <BottomScroll $corner><Scroll len={320} /></BottomScroll>
        </GridBox>

        <Today>
          <Heading as="span" $bg="#2e8b57">HÔM NAY MUA</Heading>
          <TodayBox>0 ₫</TodayBox>
          <Small><span>0,000</span><input aria-label="0,000" /></Small>
          <Xls type="button">XLS</Xls>
        </Today>

        <GridBox>
          <GridMain $h={121} $bg="#ababab">
            <Clip>
              <DataTable>
                <colgroup><col width="41" /><col width="80" /><col width="120" /><col width="80" /><col /><col width="100" /><col width="74" /></colgroup>
                <thead><tr><th /><th>ngaymua</th><th>khach</th><th /><th /><th>hlv</th><th>qui4s</th></tr></thead>
                <tbody><tr><td>&nbsp;*</td><td /><td /><td /><td /><td /><td /></tr></tbody>
              </DataTable>
            </Clip>
          </GridMain>
          <BottomScroll><Scroll len={314} /></BottomScroll>
        </GridBox>
      </TradeSide>
    </Form>
  </BuyFrame>
);

/* ---------- Paint ---------- */

const Paint = styled.main`
  flex: 1;
  min-height: 0;
  display: flex;
  flex-direction: column;
`;

const PaintTitle = styled.header`
  flex: 0 0 22px;
  display: flex;
  align-items: flex-start;
  padding-right: 2px;
  border-bottom: 1px solid #15191e;
  box-shadow: inset 0 -1px 0 #7f868d;
  background:
    radial-gradient(ellipse 26px 14px at 30px 20px, #d8dcc8, transparent),
    radial-gradient(ellipse 34px 14px at 112px 22px, #86b6ee, transparent),
    radial-gradient(ellipse 34px 14px at 190px 20px, #f4a8a0, transparent),
    radial-gradient(ellipse 26px 14px at 262px 20px, #4f86cc, transparent),
    radial-gradient(ellipse 30px 12px at 337px 18px, #6ea854, transparent),
    linear-gradient(90deg, rgba(170,175,180,.75), rgba(150,156,162,.7) 210px, transparent 300px),
    #283746;
`;
const QuickBar = styled.div`
  flex: 1;
  display: flex;
  align-items: center;
  height: 21px;
  gap: 8px;
  i { width: 1px; height: 13px; background: #ccd2d8; }
  i + h1 { margin-left: -2px; }
  h1 { margin: 0; font: 11px/20px ${ui}; text-shadow: 0 0 5px #fff, 0 0 9px #fff; }
`;

const Tabs = styled.nav`
  flex: 0 0 24px;
  display: flex;
  align-items: flex-end;
  padding-right: 4px;
  background: #dfe9f5;
  border-bottom: 1px solid #b9c9de;
`;
const FileTab = styled.button`
  width: 56px;
  height: 22px;
  display: flex;
  align-items: center;
  justify-content: center;
  gap: 6px;
  border: 1px solid #174a92;
  border-radius: 2px 2px 0 0;
  background: linear-gradient(#4c86cc, #2a62ae 50%, #174f9e 50%, #3b83cf);
`;
const Tab = styled.button<{ $on?: boolean }>`
  width: 54px;
  height: 22px;
  margin: 0 0 -1px 2px;
  color: #1e395b;
  background: ${(p) => (p.$on ? "#fafcff" : "transparent")};
  border: 1px solid ${(p) => (p.$on ? "#bccce0" : "transparent")};
  border-bottom: 0;
  border-radius: 3px 3px 0 0;
`;
const Help = styled.button`
  margin: 0 0 4px auto;
  background: none;
`;

const Ribbon = styled.div`
  flex: 0 0 92px;
  display: flex;
  padding: 2px 0 0;
  background: linear-gradient(#f8fbff, #e6eef8 35%, #dbe6f4 55%, #dde7f5);
  border-bottom: 2px solid #a9bdd0;
  color: #1e395b;
`;
const Group = styled.div<{ $w: number }>`
  width: ${(p) => p.$w}px;
  flex: none;
  display: flex;
  flex-direction: column;
  background: linear-gradient(#a9bad2, #a9bad2) right 4px / 1px 78px no-repeat;
`;
const GroupBody = styled.div<{ $pad?: number; $gap?: number }>`
  flex: 0 0 69px;
  display: flex;
  align-items: flex-start;
  gap: ${(p) => p.$gap ?? 0}px;
  padding: 2px 0 0 ${(p) => p.$pad ?? 0}px;
`;
const GroupName = styled.div`
  text-align: center;
  color: #76839b;
  line-height: 19px;
`;
const BigButton = styled.button<{ $on?: boolean; $w?: number; $dim?: boolean }>`
  width: ${(p) => p.$w ?? 42}px;
  height: 66px;
  display: flex;
  flex-direction: column;
  align-items: center;
  gap: 3px;
  padding-top: 2px;
  border: 1px solid ${(p) => (p.$on ? "#c29b29" : "transparent")};
  border-radius: 2px;
  background: ${(p) => (p.$on ? "linear-gradient(#fcdda6, #fccf86 38%, #fec057 40%, #ffd982)" : "none")};
  line-height: 13px;
  color: ${(p) => (p.$dim ? "#8d96a5" : "#1e395b")};
  white-space: pre-line;
`;
const IconBox = styled.span`
  height: 32px;
  display: grid;
  place-items: center;
`;
const SmallList = styled.div`
  display: flex;
  flex-direction: column;
`;
const SmallButton = styled.button<{ $dim?: boolean }>`
  display: flex;
  align-items: center;
  gap: 3px;
  height: 22px;
  background: none;
  color: ${(p) => (p.$dim ? "#8d96a5" : "#1e395b")};
`;
const Stack = styled.div`
  display: flex;
  flex-direction: column;
  gap: 7px;
  padding-top: 8px;
`;
const ToolStrip = styled.div`
  display: flex;
  border: 1px solid #a9bad2;
  border-radius: 2px;
  background: #f2f6fc;
  button { width: 22px; height: 20px; display: grid; place-items: center; background: none; }
  button + button { width: 23px; border-left: 1px solid #c6d2e4; }
`;
const TextGlyph = styled.span`
  font: bold 19px/18px ${times};
  color: #1f3a63;
`;
const ShapeBox = styled.div`
  display: flex;
  height: 60px;
  margin: 2px 7px 0 0;
  border: 1px solid #a9bad2;
  background: #f5f9fd;
`;
const ShapeGrid = styled.div`
  display: grid;
  grid-template-columns: repeat(7, 20px);
  grid-auto-rows: 19px;
  place-items: center;
  width: 141px;
`;
const ShapeScroll = styled.div`
  width: 14px;
  display: flex;
  flex-direction: column;
  align-items: center;
  justify-content: space-around;
  border-left: 1px solid #d3deec;
  background: #e6eef8;
`;
const Palette = styled.div`
  display: grid;
  grid-template-columns: repeat(10, 20px);
  grid-auto-rows: 20px;
  gap: 2px;
  padding: 1px 4px 0 1px;
`;
const Swatch = styled.button<{ $c?: string }>`
  background: ${(p) => p.$c ?? "transparent"};
  border: 1px solid #a0a0a0;
  box-shadow: ${(p) => (p.$c ? "inset 0 0 0 1px #fff" : "none")};
`;
const ColorChip = styled.span<{ $c: string; $s: number }>`
  width: ${(p) => p.$s}px;
  height: ${(p) => p.$s}px;
  background: ${(p) => p.$c};
  border: 1px solid #808080;
  box-shadow: inset 0 0 0 1px #fff;
`;
const Spectrum = styled.span`
  width: 28px;
  height: 28px;
  border: 2px solid #fff;
  outline: 1px solid #999;
  background:
    linear-gradient(transparent, #888),
    linear-gradient(90deg, #f22, #ff0 18%, #0f0 35%, #0ff 52%, #00f 68%, #f0f 84%, #f02);
`;

const palette = [
  "#000000", "#7f7f7f", "#880015", "#ed1c24", "#ff7f27", "#fff200", "#22b14c", "#00a2e8", "#3f48cc", "#a349a4",
  "#ffffff", "#c3c3c3", "#b97a57", "#ffaec9", "#ffc90e", "#efe4b0", "#b5e61d", "#99d9ea", "#7092be", "#c8bfe7",
];

const shapePaths = [
  "M1 2l15 12",
  "M1 14c3 0 2-7 5-7s1 6 4 6 3-11 6-11",
  "M8 2.500c9 0 9 12 0 12s-9-12 0-12z",
  "M1 3h14v11H1z",
  "M3 3h10q2 0 2 2v7q0 2-2 2H3q-2 0-2-2V5q0-2 2-2z",
  "M1 14l4-11h8l-3 6h5v5z",
  "M8 2l7 12H1z",
  "M1.500 1.500l14 13h-14z",
  "M8 1l7 7-7 7-7-7z",
  "M8 1l7.500 5.500-3 8.500h-9l-3-8.500z",
  "M8 1l7 3.500v7L8 15l-7-3.500v-7z",
  "M1 5h7V1.500l7 6.500-7 6.500V11H1z",
  "M15 5H8V1.500L1 8l7 6.500V11h7z",
  "M5 15V8H1.500L8 1l6.500 7H11v7z",
  "M5 1v7H1.500L8 15l6.500-7H11V1z",
  "M8 1l1.500 5.500L15 8l-5.500 1.500L8 15l-1.500-5.500L1 8l5.500-1.500z",
  "M8 1l2 5h5l-4 3.500 1.500 5.500L8 12l-4.500 3L5 9.500 1 6h5z",
  "M8 1l2 3.500h4.500L12.500 8l2 3.500H10L8 15l-2-3.500H1.500l2-3.500-2-3.500H6z",
  "M3 2.500h10q2 0 2 2v5q0 2-2 2H7l-3 3v-3H3q-2 0-2-2v-5q0-2 2-2z",
  "M8 2.500c9 0 9 9.500 0 9.500l-5 2.500 1-3.500C-1.500 8 .5 2.500 8 2.500z",
  "M4 3c1-2 4-1 4 0 1-2 5-1 5 1 3 0 3 4 1 4 1 2-1 4-3 3-1 2-4 2-5 0-2 1-4-1-3-2-3 0-3-3-1-4-1-1 0-2 2-2zM3 13l-1 2",
];

const RIcon = ({ children, s = 14 }: { children: React.ReactNode; s?: number }) => (
  <svg width={s} height={s} viewBox="0 0 16 16" fill="none">{children}</svg>
);
const Caret = ({ dim }: { dim?: boolean }) => <Arrow dir="down" size={6} color={dim ? "#a5afbe" : "#3d4f6a"} />;

const PaintRibbon = () => (
  <Ribbon>
    <Group $w={106}>
      <GroupBody $pad={4} $gap={4}>
        <BigButton $w={45}>
          <IconBox>
            <svg width="26" height="32" viewBox="0 0 26 32">
              <rect x="1" y="3" width="24" height="28" rx="2" fill="#9c6a2c" stroke="#6e4718" />
              <rect x="4" y="6" width="18" height="22" fill="#fff" />
              <path d="M6 11h14M6 14h14M6 17h14M6 20h14M6 23h14" stroke="#a9bdd6" />
              <path d="M8 6q0-3 3-3 2-4 4 0 3 0 3 3z" fill="#c9ccd2" stroke="#666" />
            </svg>
          </IconBox>
          Paste<Caret />
        </BigButton>
        <SmallList>
          <SmallButton $dim>
            <RIcon><path d="M4.500 0l5 10M11.500 0L6.500 10" stroke="#9aa4b5" strokeWidth="2.200" /><circle cx="4.500" cy="12.500" r="2.300" stroke="#8d99ad" strokeWidth="1.700" /><circle cx="11.500" cy="12.500" r="2.300" stroke="#8d99ad" strokeWidth="1.700" /></RIcon>Cut
          </SmallButton>
          <SmallButton $dim>
            <RIcon><path d="M1 1h6l3 3v8H1zM6 5h6l3 3v7H6z" fill="#eef2f7" stroke="#9aa6b8" /><path d="M8 9h5M8 11h5M8 13h5M3 4h3M3 6h3" stroke="#9aa6b8" /></RIcon>Copy
          </SmallButton>
        </SmallList>
      </GroupBody>
      <GroupName>Clipboard</GroupName>
    </Group>

    <Group $w={122}>
      <GroupBody $pad={5} $gap={5}>
        <BigButton $on>
          <IconBox>
            <svg width="32" height="26" viewBox="0 0 32 26"><rect x="1" y="1" width="29" height="23" fill="none" stroke="#2a6496" strokeWidth="1.200" strokeDasharray="2 1" /></svg>
          </IconBox>
          Select<Caret />
        </BigButton>
        <SmallList>
          <SmallButton $dim><RIcon><path d="M4 1v11h11M1 4h11v11M4 12L14 2" stroke="#97a2b3" strokeWidth="1.400" /></RIcon>Crop</SmallButton>
          <SmallButton><RIcon><rect x="5" y="1" width="10" height="9" fill="#f3f8fd" stroke="#20689e" strokeWidth="1.400" /><rect x="1" y="8" width="6" height="6" fill="#fff" stroke="#20689e" strokeWidth="1.400" /></RIcon>Resize</SmallButton>
          <SmallButton><RIcon><path d="M8 15V5l7 10z" fill="#1f6fa8" /><path d="M6 15V7L0 15z" fill="#bcc9d8" /><path d="M2 6q1-4 6-3M6 .5L9 3 6 5.500" stroke="#2a7fd0" strokeWidth="1.300" /></RIcon>Rotate <Caret /></SmallButton>
        </SmallList>
      </GroupBody>
      <GroupName>Image</GroupName>
    </Group>

    <Group $w={80}>
      <GroupBody $pad={5}>
        <Stack>
          <ToolStrip>
            <button aria-label="Pencil"><RIcon s={16}><path d="M2 14l1-4 9-9q2 0 3 3l-9 9z" fill="#f5d36c" stroke="#8a6a2a" strokeWidth=".8" /><path d="M12 1q2 0 3 3l-1.500 1.500-3-3z" fill="#e88a7a" /><path d="M1 15l2-4 2.500 2z" fill="#333" /></RIcon></button>
            <button aria-label="Fill"><RIcon s={16}><path d="M8 1l8 7-6 7-7-7z" fill="#cfe0f2" stroke="#7389a5" /><path d="M8 1v7" stroke="#7389a5" /><path d="M0 12q-1-9 7-8l-3 3q-2 2-1 5-2 3-3 0z" fill="#e2542c" /></RIcon></button>
            <button aria-label="Text"><TextGlyph>A</TextGlyph></button>
          </ToolStrip>
          <ToolStrip>
            <button aria-label="Eraser"><RIcon s={16}><path d="M1 10l7-7h7l-6 7z" fill="#f5b4a9" stroke="#c3675c" /><path d="M1 10h8l6-7v4l-6 7H1z" fill="#e88578" stroke="#c3675c" /></RIcon></button>
            <button aria-label="Color picker"><RIcon s={16}><path d="M2 14l7-7 2 2-7 6z" fill="#cfe2f4" stroke="#56759b" /><path d="M8 5l3-3q3-2 4 1t-3 4l-1 3z" fill="#265d9c" /></RIcon></button>
            <button aria-label="Magnifier"><RIcon s={16}><circle cx="6.500" cy="6" r="5" fill="#dceaf8" stroke="#7a8ca5" strokeWidth="1.600" /><path d="M10 10l5 5" stroke="#9a6430" strokeWidth="2.500" /></RIcon></button>
          </ToolStrip>
        </Stack>
      </GroupBody>
      <GroupName>Tools</GroupName>
    </Group>

    <Group $w={57}>
      <GroupBody $pad={5}>
        <BigButton $w={46}>
          <IconBox>
            <svg width="33" height="32" viewBox="0 0 33 32">
              <rect x=".5" y=".5" width="32" height="31" fill="#f2f6f8" stroke="#999" />
              <path d="M14 6C4 8-1 24 8 28c5 2 8-2 9-5l-3-3c-3 5-9 4-8-3 1-5 4-8 8-11z" fill="#ea5a20" />
              <path d="M32 4L21 15l3 5 8-7z" fill="#5a6c86" />
              <path d="M31 1L19 14l3 2L32 5V1z" fill="#dfe5ec" />
              <path d="M12 27c2-2 2-10 9-12 5 3 5 8 1 11-3 2-7 3-10 1z" fill="#a5682c" />
            </svg>
          </IconBox>
          Brushes<Caret />
        </BigButton>
      </GroupBody>
    </Group>

    <Group $w={246}>
      <GroupBody $pad={6}>
        <ShapeBox>
          <ShapeGrid>
            {shapePaths.map((d) => (
              <svg key={d} width="16" height="16" viewBox="0 0 16 16"><path d={d} fill="#eef5fb" stroke="#1f6299" strokeWidth="1.100" /></svg>
            ))}
          </ShapeGrid>
          <ShapeScroll><Arrow dir="up" size={6} color="#a5afbe" /><Caret /><svg width="8" height="8" viewBox="0 0 8 8"><path d="M0 1h8" stroke="#3d4f6a" /><path d="M1 3.500h6L4 7z" fill="#3d4f6a" /></svg></ShapeScroll>
        </ShapeBox>
        <SmallList>
          <SmallButton $dim><RIcon s={16}><path d="M13 2H1v13h11" stroke="#98a4b8" /><path d="M4 13l2-4 8-8 2 2-9 9z" fill="#d5dce6" stroke="#8d9ab0" /></RIcon>Outline <Caret dim /></SmallButton>
          <SmallButton $dim><RIcon s={16}><path d="M7 1l7 6-5 5-7-5z" fill="#dfe5ee" stroke="#8d9ab0" /><path d="M2 6q2-4 6-2l-5 6z" fill="#8d9ab0" /><path d="M0 12.500h16v3H0z" fill="#a5b1c5" /></RIcon>Fill <Caret dim /></SmallButton>
        </SmallList>
      </GroupBody>
      <GroupName>Shapes</GroupName>
    </Group>

    <Group $w={53}>
      <GroupBody $pad={4}>
        <BigButton $dim>
          <IconBox><svg width="32" height="28" viewBox="0 0 32 28"><path d="M0 1h32M0 7h32" stroke="#7b8fb4" strokeWidth="1.500" /><path d="M0 14h32" stroke="#7b8fb4" strokeWidth="4" /><path d="M0 24h32" stroke="#7b8fb4" strokeWidth="7" /></svg></IconBox>
          Size<Caret dim />
        </BigButton>
      </GroupBody>
    </Group>

    <Group $w={357}>
      <GroupBody $pad={5}>
        <BigButton $on><IconBox><ColorChip $c="#000" $s={32} /></IconBox>{"Color\n1"}</BigButton>
        <BigButton><IconBox><ColorChip $c="#fff" $s={24} /></IconBox>{"Color\n2"}</BigButton>
        <Palette>
          {palette.map((c) => <Swatch key={c} $c={c} aria-label={c} />)}
          {Array.from({ length: 10 }, (_, i) => <Swatch key={i} aria-label="Empty" />)}
        </Palette>
        <BigButton $w={34}><IconBox><Spectrum /></IconBox>{"Edit\ncolors"}</BigButton>
      </GroupBody>
      <GroupName>Colors</GroupName>
    </Group>
  </Ribbon>
);

const Canvas = styled.div`
  flex: 1;
  min-height: 0;
  display: flex;
  padding-left: 5px;
  background: #cfdbea;
  overflow: hidden;
`;
const Picture = styled.div`
  flex: 1;
  min-width: 0;
  overflow: hidden;
  display: flex;
  flex-direction: column;
`;
const Sliver = styled.div`
  flex: 0 0 5px;
  display: flex;
  overflow: hidden;
  border-left: 8px solid #3c444e;
  background: linear-gradient(90deg, #ba55d3 12px, #fff 12px 255px, #eee 255px 271px, #9932cc 271px);
  ${Lunar} { margin-left: auto; padding: 0; width: 162px; line-height: 16px; }
`;
const TallScroll = styled.div`
  display: flex;
  flex: 0 0 17px;
  height: 792px;
`;

export default function App() {
  return (
    <Screen>
      <GlobalStyle />
      <TopStrip>
        <Desktop>
          <DesktopIcons />
          <Invoice />
        </Desktop>
      </TopStrip>
      <Paint>
        <PaintTitle>
          <QuickBar>
            <RIcon s={16}><path d="M0 9q0-7 7-7t6 5-5 2-1 5-7-5z" fill="#e6edf4" stroke="#7794b5" /><circle cx="3.500" cy="8" r="1.700" fill="#e33" /><circle cx="7" cy="5" r="1.700" fill="#2a8" /><circle cx="5" cy="11.500" r="1.500" fill="#27d" /><path d="M13.500 0v16" stroke="#d8822a" strokeWidth="3" /></RIcon>
            <i />
            <RIcon s={15}><path d="M1 1h14v14H1z" fill="#7a50b8" /><path d="M4 1h8v6H4z" fill="#f5f2fa" /><path d="M4 10h8v5H4z" fill="#d8cdea" /></RIcon>
            <RIcon s={14}><path d="M4 4q9-2 9 4t-6 7" stroke="#2f93e0" strokeWidth="3" /><path d="M0 4l6-4v9z" fill="#2f93e0" /></RIcon>
            <RIcon s={14}><path d="M12 4q-9-2-9 4t6 7" stroke="#a9b6c8" strokeWidth="3" /><path d="M16 4l-6-4v9z" fill="#a9b6c8" /></RIcon>
            <svg width="8" height="8" viewBox="0 0 8 8"><path d="M0 1h8" stroke="#fff" /><path d="M0 3h8L4 7z" fill="#111" stroke="#fff" strokeWidth=".5" /></svg>
            <i />
            <h1>bankethopmuande - Paint</h1>
          </QuickBar>
          <Captions dark restore />
        </PaintTitle>
        <Tabs>
          <FileTab aria-label="File">
            <svg width="14" height="12" viewBox="0 0 14 12"><rect x=".5" y=".5" width="13" height="11" fill="#fff" stroke="#cde" /><path d="M7 3h5M7 5h5M7 7h5M7 9h5" stroke="#2a62ae" /><path d="M2 3h3v6H2z" fill="#c5d8ee" /></svg>
            <Arrow dir="down" color="#fff" size={8} />
          </FileTab>
          <Tab $on>Home</Tab>
          <Tab>View</Tab>
          <Help aria-label="Help">
            <svg width="15" height="15" viewBox="0 0 15 15"><circle cx="7.500" cy="7.500" r="6.800" fill="#1f55c4" stroke="#9db9e6" strokeWidth="1.200" /><path d="M5.200 5.800q.2-2.300 2.400-2.300t2.300 2q0 1-1.200 1.700t-1 1.500" fill="none" stroke="#fff" strokeWidth="1.500" /><circle cx="7.600" cy="11" r="1" fill="#fff" /></svg>
          </Help>
        </Tabs>
        <PaintRibbon />
        <Canvas>
          <Picture>
            <Sliver><Lunar>Năm Giáp Thìn</Lunar></Sliver>
            <Desktop>
              <DesktopIcons />
              <Invoice full />
              <SideEdge />
              <BuyWindow />
            </Desktop>
          </Picture>
          <TallScroll><Scroll v len={592} offset={149} /></TallScroll>
        </Canvas>
      </Paint>
    </Screen>
  );
}
